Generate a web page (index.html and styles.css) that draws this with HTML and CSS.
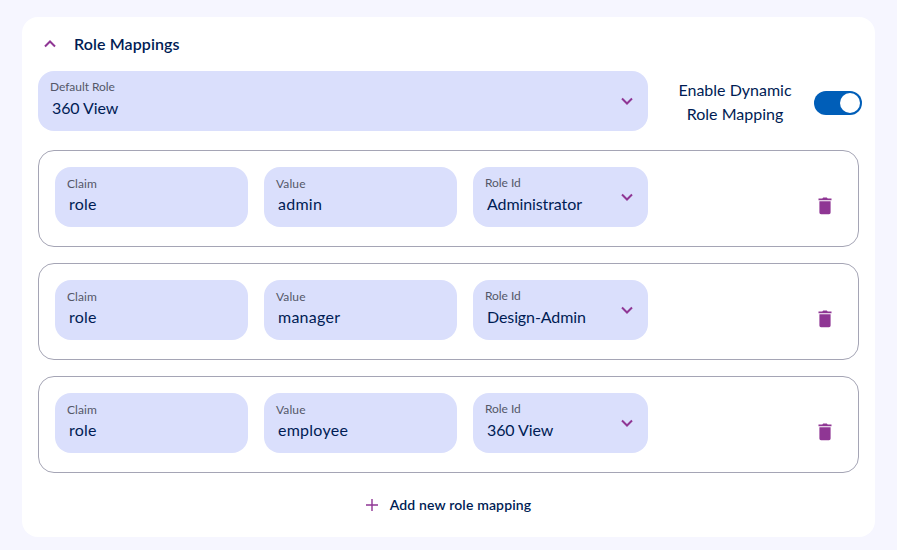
FILE: index.html
```html
<!DOCTYPE html>
<html lang="en">
<head>
<meta charset="utf-8">
<title>Role Mappings</title>
<link rel="stylesheet" href="styles.css">
</head>
<body>
<main class="card">
  <header class="card-header">
    <svg class="chevron" viewBox="0 0 12 8"><path d="M1 6.5 6 1.5l5 5"/></svg>
    <h1 class="title">Role Mappings</h1>
  </header>
  <section class="default-row">
    <div class="field field-select">
      <span class="label">Default Role</span>
      <span class="value">360 View</span>
      <svg class="chevron" viewBox="0 0 12 8"><path d="M1 1.5l5 5 5-5"/></svg>
    </div>
    <div class="toggle-label">Enable Dynamic<br>Role Mapping</div>
    <div class="toggle"><span class="knob"></span></div>
  </section>
  <section class="mappings">
    <div class="mapping">
      <div class="field"><span class="label">Claim</span><span class="value">role</span></div>
      <div class="field"><span class="label">Value</span><span class="value">admin</span></div>
      <div class="field field-select field-role">
        <span class="label">Role Id</span><span class="value">Administrator</span>
        <svg class="chevron" viewBox="0 0 12 8"><path d="M1 1.5l5 5 5-5"/></svg>
      </div>
      <svg class="trash" viewBox="0 0 14 18"><path d="M.5 1.4h3.8l.9-.9h3.6l.9.9h3.8v1.8H.5zM1.4 4.2h11.2v11.4a1.6 1.6 0 0 1-1.6 1.6H3a1.6 1.6 0 0 1-1.6-1.6z"/></svg>
    </div>
    <div class="mapping">
      <div class="field"><span class="label">Claim</span><span class="value">role</span></div>
      <div class="field"><span class="label">Value</span><span class="value">manager</span></div>
      <div class="field field-select field-role">
        <span class="label">Role Id</span><span class="value">Design-Admin</span>
        <svg class="chevron" viewBox="0 0 12 8"><path d="M1 1.5l5 5 5-5"/></svg>
      </div>
      <svg class="trash" viewBox="0 0 14 18"><path d="M.5 1.4h3.8l.9-.9h3.6l.9.9h3.8v1.8H.5zM1.4 4.2h11.2v11.4a1.6 1.6 0 0 1-1.6 1.6H3a1.6 1.6 0 0 1-1.6-1.6z"/></svg>
    </div>
    <div class="mapping">
      <div class="field"><span class="label">Claim</span><span class="value">role</span></div>
      <div class="field"><span class="label">Value</span><span class="value">employee</span></div>
      <div class="field field-select field-role">
        <span class="label">Role Id</span><span class="value">360 View</span>
        <svg class="chevron" viewBox="0 0 12 8"><path d="M1 1.5l5 5 5-5"/></svg>
      </div>
      <svg class="trash" viewBox="0 0 14 18"><path d="M.5 1.4h3.8l.9-.9h3.6l.9.9h3.8v1.8H.5zM1.4 4.2h11.2v11.4a1.6 1.6 0 0 1-1.6 1.6H3a1.6 1.6 0 0 1-1.6-1.6z"/></svg>
    </div>
  </section>
  <div class="add">
    <svg class="plus" viewBox="0 0 12 12"><path d="M6 0v12M0 6h12"/></svg>
    <span class="add-text">Add new role mapping</span>
  </div>
</main>
</body>
</html>
```
FILE: styles.css
```css
* { box-sizing: border-box; }
body {
  margin: 0;
  height: 550px;
  padding: 17px 22px 13px;
  background: #f6f6ff;
  color: #001c54;
  font-family: Lato, "Liberation Sans", sans-serif;
  font-size: 16px;
  letter-spacing: 0.25px;
}
.card {
  height: 520px;
  padding: 0 16px;
  border-radius: 16px;
  background: #fff;
}
.card-header {
  display: flex;
  align-items: center;
  height: 54px;
  padding-left: 6px;
}
.title {
  margin: 0 0 2px 18px;
  font-size: 16px;
  font-weight: 600;
  letter-spacing: 0.1px;
}
.chevron {
  width: 12px;
  height: 8px;
  fill: none;
  stroke: #8f3694;
  stroke-width: 2;
}
.default-row {
  display: flex;
  margin-right: -3px;
}
.field {
  display: flex;
  flex-direction: column;
  flex-shrink: 0;
  width: 193px;
  height: 60px;
  padding: 9px 12px 0;
  border-radius: 16px;
  background: #dadffc;
}
.label {
  font-size: 12px;
  line-height: 16px;
  letter-spacing: 0.1px;
  color: #545768;
}
.value {
  padding-left: 2px;
  line-height: 24px;
}
.field-select {
  display: grid;
  grid-template-columns: 1fr 12px;
  grid-template-rows: 16px 24px;
  row-gap: 1px;
  width: 610px;
  padding: 8px 15px 0 12px;
}
.field-select .label { letter-spacing: -0.05px; }
.field-select .value {
  grid-row: 2;
  letter-spacing: -0.1px;
}
.field-select .chevron {
  grid-column: 2;
  grid-row: 1 / 3;
  align-self: center;
  margin-top: 3px;
}
.field-role { width: 175px; }
.toggle-label {
  width: 134px;
  margin: 7px 0 0 20px;
  text-align: center;
  line-height: 24px;
  letter-spacing: 0;
}
.toggle {
  display: flex;
  flex-shrink: 0;
  justify-content: flex-end;
  align-items: center;
  width: 48px;
  height: 24px;
  margin: 20px 0 0 auto;
  padding-right: 2px;
  border-radius: 12px;
  background: #005eb8;
}
.knob {
  width: 20px;
  height: 20px;
  border-radius: 50%;
  background: #fff;
}
.mappings {
  display: grid;
  gap: 16px;
  margin-top: 19px;
}
.mapping {
  display: flex;
  gap: 16px;
  height: 97px;
  padding: 16px 26.5px 0 16px;
  border: 1px solid #a5a5b5;
  border-radius: 16px;
}
.trash {
  width: 14px;
  height: 18px;
  margin: 30px 0 0 auto;
  fill: #8f3694;
}
.add {
  display: flex;
  align-items: center;
  justify-content: center;
  gap: 12px;
  margin-top: 20px;
  height: 24px;
  font-size: 14px;
  font-weight: 600;
  letter-spacing: 0.15px;
}
.add-text { margin-bottom: 2px; }
.plus {
  width: 12px;
  height: 12px;
  fill: none;
  stroke: #8f3694;
  stroke-width: 1.4;
}
```
